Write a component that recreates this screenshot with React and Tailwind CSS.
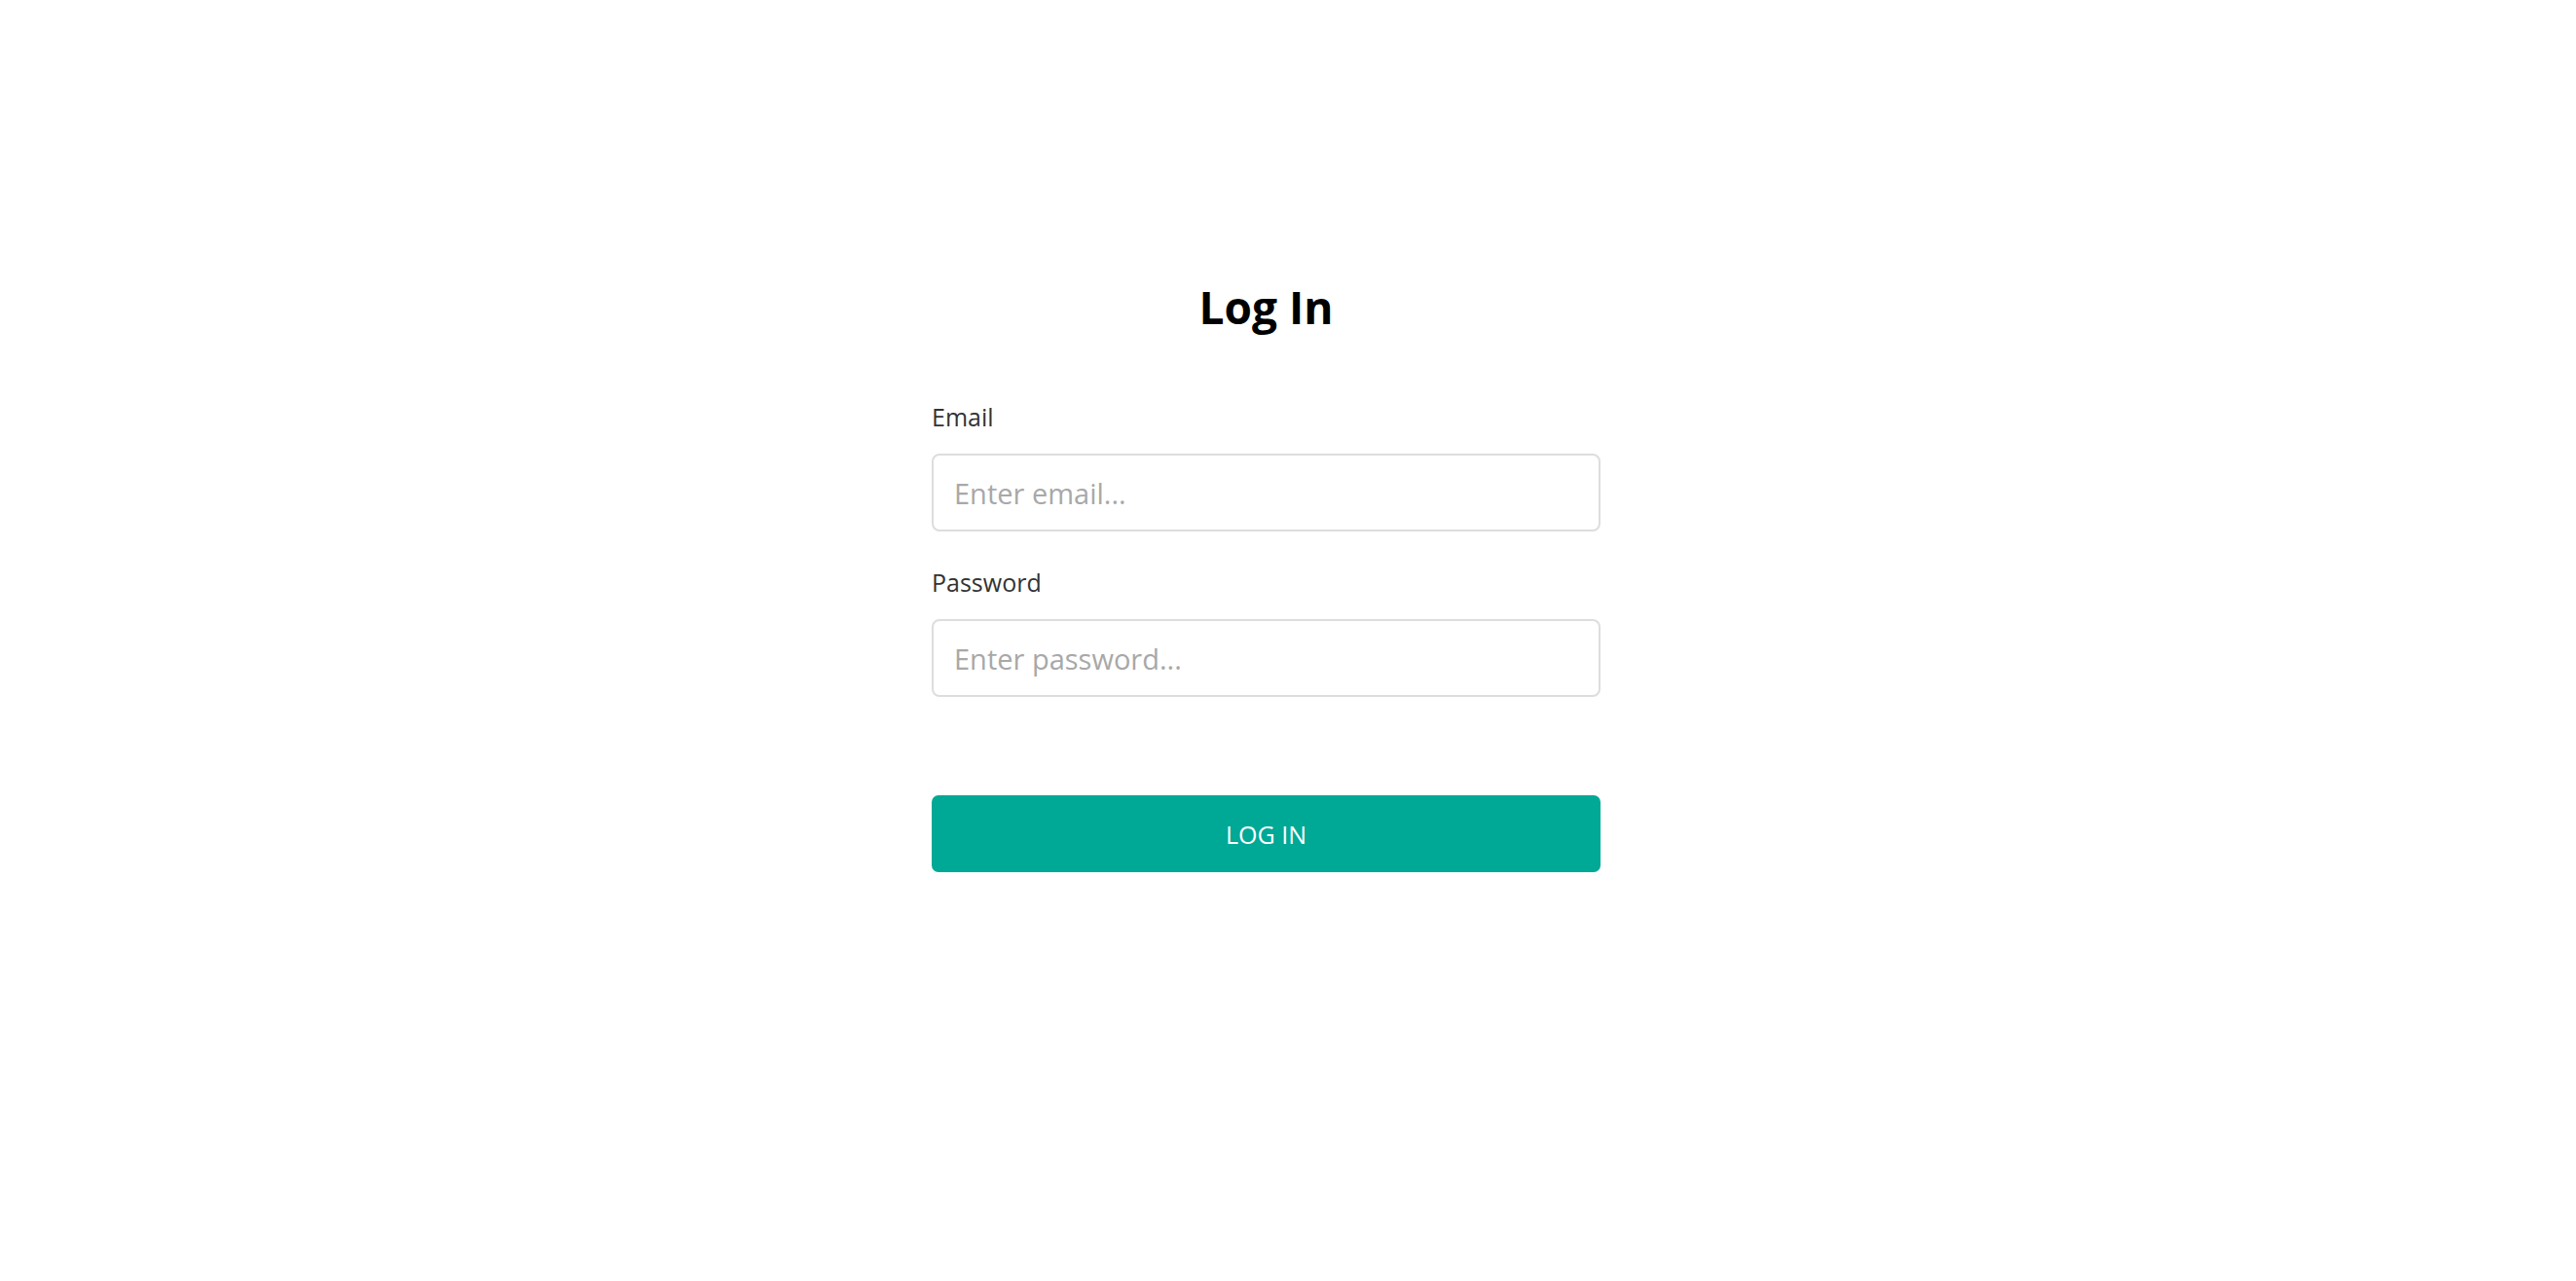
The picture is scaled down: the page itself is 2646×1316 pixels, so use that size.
import React, { useState } from "react";

const App = () => {
  const [email, setEmail] = useState("");
  const [password, setPassword] = useState("");

  return (
    <div className="bg-white min-h-screen flex justify-center pr-[45px] font-['Open_Sans',sans-serif]">
      <div className="w-[687px] pt-[292px]">
        {/* Header */}
        <h1 className="text-[46px] leading-none font-bold text-black text-center mb-[78px]">Log In</h1>

        <form onSubmit={(e) => e.preventDefault()}>
          {/* Email */}
          <label className="block text-[25px] leading-none text-[#333] mb-[25px]">Email</label>
          <input
            type="email"
            placeholder="Enter email..."
            value={email}
            onChange={(e) => setEmail(e.target.value)}
            className="w-full h-[80px] border-2 border-[#dddddd] rounded-[8px] pl-[21px] text-[29px] text-[#333] placeholder-[#a8a8a8] outline-none"
          />

          {/* Password */}
          <label className="block text-[25px] leading-none text-[#333] mt-[40px] mb-[25px]">Password</label>
          <input
            type="password"
            placeholder="Enter password..."
            value={password}
            onChange={(e) => setPassword(e.target.value)}
            className="w-full h-[80px] border-2 border-[#dddddd] rounded-[8px] pl-[21px] text-[29px] text-[#333] placeholder-[#a8a8a8] outline-none"
          />

          <button
            type="submit"
            className="w-full h-[79px] mt-[101px] rounded-[7px] bg-[#00a896] text-white text-[25px] uppercase flex items-center justify-center pt-[3px]"
          >
            Log In
          </button>
        </form>
      </div>
    </div>
  );
};

export default App;
